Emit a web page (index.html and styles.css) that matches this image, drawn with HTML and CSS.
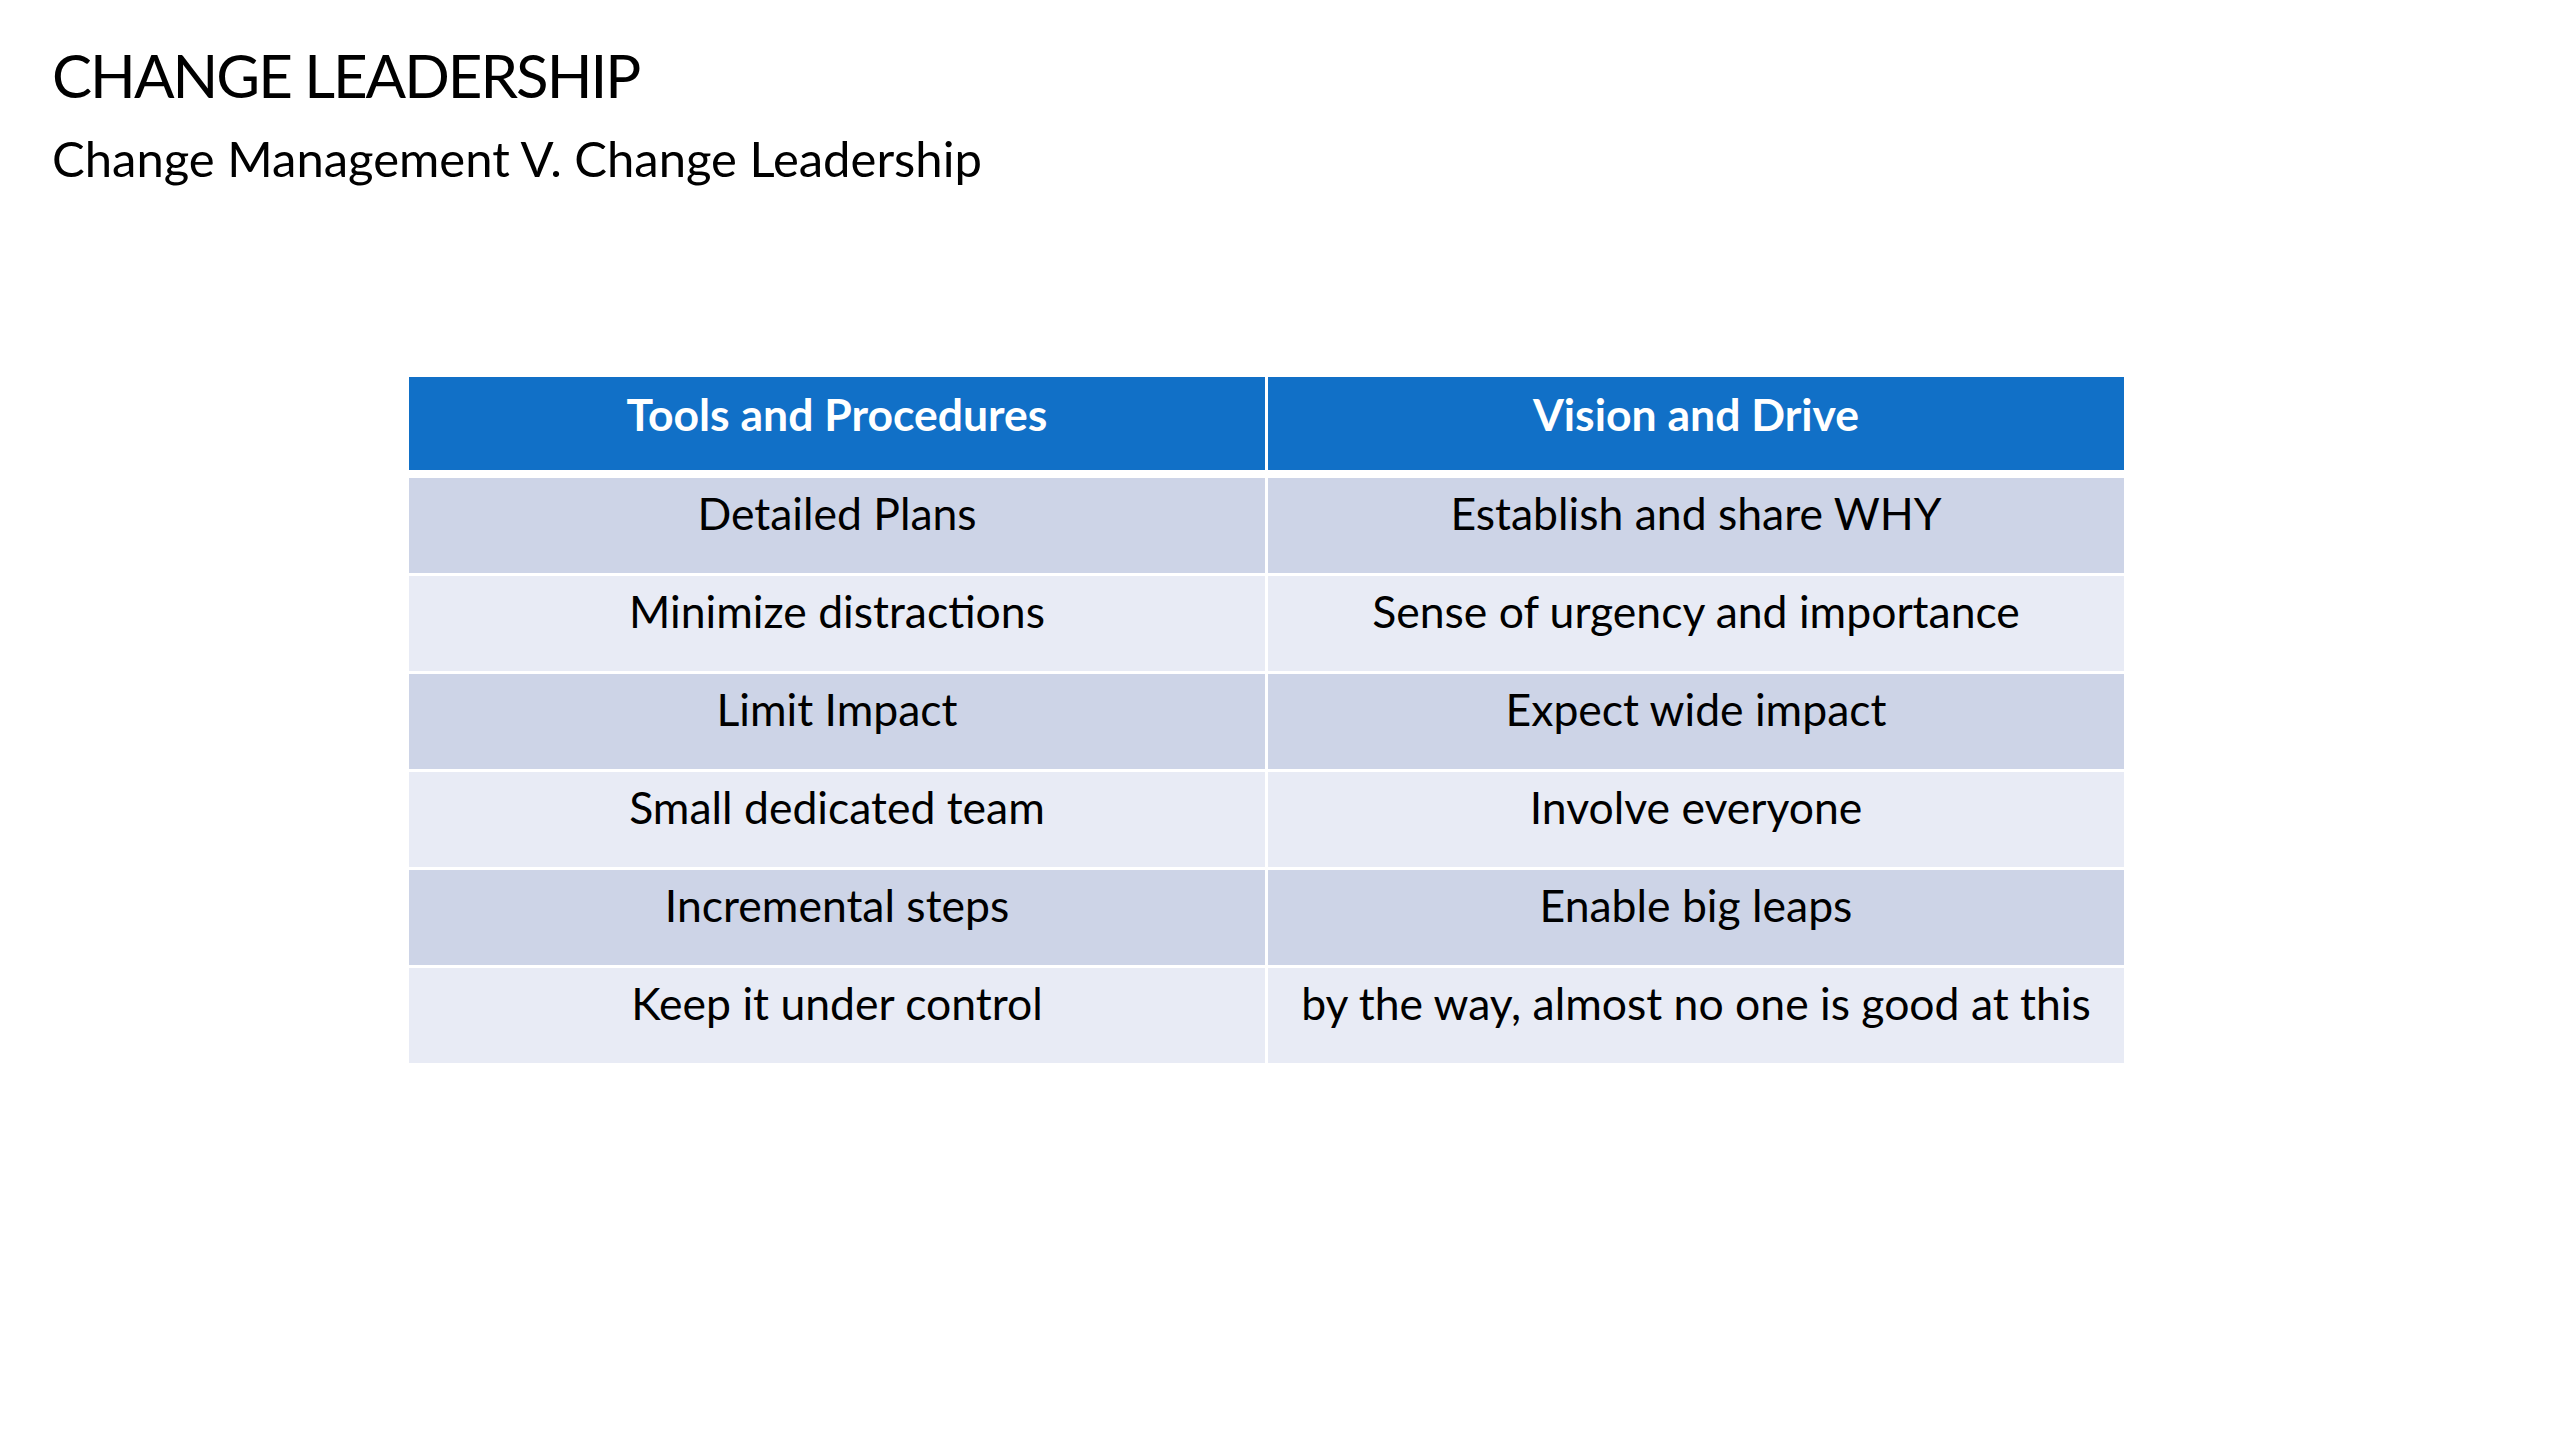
FILE: index.html
```html
<!DOCTYPE html>
<html lang="en">
<head>
<meta charset="utf-8">
<title>Change Leadership</title>
<link rel="stylesheet" href="styles.css">
</head>
<body>
<div class="slide">
  <header class="heading">
    <h1 class="title">CHANGE LEADERSHIP</h1>
    <p class="subtitle">Change Management V. Change Leadership</p>
  </header>
  <div class="table">
    <div class="row head">
      <div class="cell">Tools and Procedures</div>
      <div class="cell">Vision and Drive</div>
    </div>
    <div class="row odd">
      <div class="cell">Detailed Plans</div>
      <div class="cell">Establish and share WHY</div>
    </div>
    <div class="row even">
      <div class="cell">Minimize distractions</div>
      <div class="cell">Sense of urgency and importance</div>
    </div>
    <div class="row odd">
      <div class="cell">Limit Impact</div>
      <div class="cell">Expect wide impact</div>
    </div>
    <div class="row even">
      <div class="cell">Small dedicated team</div>
      <div class="cell">Involve everyone</div>
    </div>
    <div class="row odd">
      <div class="cell">Incremental steps</div>
      <div class="cell">Enable big leaps</div>
    </div>
    <div class="row even">
      <div class="cell">Keep it under control</div>
      <div class="cell">by the way, almost no one is good at this</div>
    </div>
  </div>
</div>
</body>
</html>
```
FILE: styles.css
```css
html, body {
  margin: 0;
  padding: 0;
  background: #ffffff;
}

.slide {
  width: 2560px;
  height: 1440px;
  font-family: Lato, "Open Sans", sans-serif;
  color: #000000;
  display: flex;
  flex-direction: column;
}

.heading {
  padding: 39px 0 0 52px;
}

.title {
  margin: 0;
  font-size: 60px;
  font-weight: 400;
  line-height: 72px;
  letter-spacing: -2px;
}

.subtitle {
  margin: 17.6px 0 0 0;
  font-size: 49px;
  line-height: 58.8px;
}

.table {
  margin: 189.6px 0 0 409px;
  width: 1715px;
  display: flex;
  flex-direction: column;
  gap: 3px;
}

.row {
  display: grid;
  grid-template-columns: 856px 856px;
  column-gap: 3px;
}

.cell {
  height: 95px;
  box-sizing: border-box;
  padding-top: 8px;
  text-align: center;
  font-size: 44.5px;
  line-height: 1.2;
}

.head {
  margin-bottom: 5px;
}

.head .cell {
  height: 93px;
  padding-top: 10px;
  background: #1170c7;
  color: #ffffff;
  font-weight: 700;
}

.odd .cell {
  background: #cdd4e7;
}

.even .cell {
  background: #e8ebf5;
}
```
